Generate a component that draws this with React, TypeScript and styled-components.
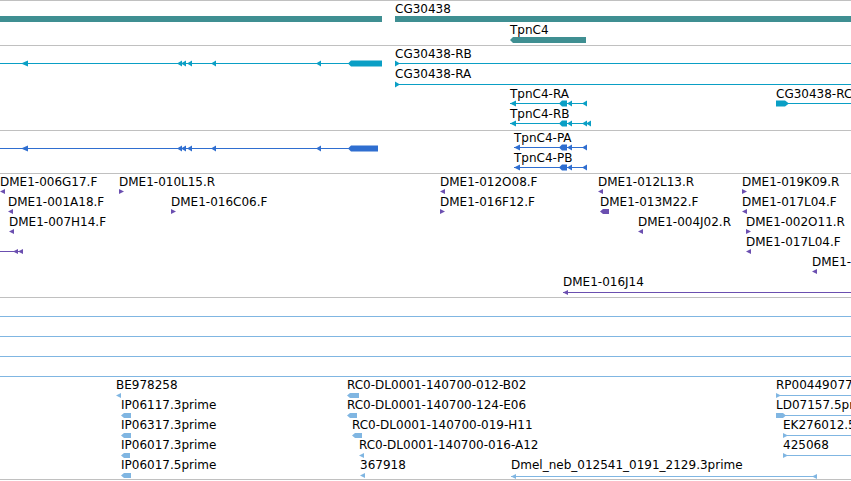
import React from 'react'
import styled, { createGlobalStyle } from 'styled-components'

const GlobalStyle = createGlobalStyle`
  html, body {
    margin: 0;
    padding: 0;
    background: #fff;
  }
  body {
    overflow: hidden;
    font-family: 'DejaVu Sans', 'Liberation Sans', sans-serif;
  }
`

const Panel = styled.div`
  width: 851px;
  height: 481px;
  overflow: hidden;
  display: flex;
  flex-direction: column;
  background: #fff;
`

const Track = styled.div<{ $h: number; $last?: boolean }>`
  position: relative;
  flex: none;
  box-sizing: border-box;
  height: ${p => p.$h}px;
  border-top: 1px solid #c0c0c0;
  ${p => (p.$last ? 'border-bottom: 1px solid #c0c0c0;' : '')}
`

const Art = styled.svg`
  position: absolute;
  left: 0;
  top: 0;
  overflow: visible;
`

const Label = styled.span`
  position: absolute;
  font-size: 12px;
  line-height: 12px;
  color: #000;
  white-space: nowrap;
`

const TEAL = '#3f8f92'
const CYAN = '#0a9fc5'
const BLUE = '#2f6ed0'
const PURPLE = '#6b4fb0'
const LBLUE = '#80b6e2'

type Shape =
  | { k: 'line'; x1: number; x2: number; y: number }
  | { k: 'arrow'; x: number; y: number; dir: 'l' | 'r'; w?: number; h?: number }
  | { k: 'block'; x1: number; x2: number; y: number; h: number; dir?: 'l' | 'r' }

interface TrackData {
  top: number
  height: number
  color: string
  labels: [string, number, number][]
  shapes: Shape[]
}

const line = (x1: number, x2: number, y: number): Shape => ({ k: 'line', x1, x2, y })
const al = (x: number, y: number, w = 5, h = 6): Shape => ({ k: 'arrow', x, y, dir: 'l', w, h })
const ar = (x: number, y: number, w = 5, h = 6): Shape => ({ k: 'arrow', x, y, dir: 'r', w, h })
const block = (x1: number, x2: number, y: number, h = 6, dir?: 'l' | 'r'): Shape => ({
  k: 'block',
  x1,
  x2,
  y,
  h,
  dir,
})

// exon pattern shared by the two TpnC4 rows
const tpnc = (x: number, end: number, y: number, extra = false): Shape[] => [
  line(x, end, y),
  al(x, y, 6),
  block(559, 567, y, 6, 'l'),
  al(567, y),
  al(582, y),
  ...(extra ? [al(586, y)] : []),
]

const leftModel = (y: number, end: number): Shape[] => [
  line(0, end, y),
  al(21, y, 7),
  al(177, y),
  al(181, y),
  al(187, y),
  al(211, y),
  al(316, y),
  block(348, end, y, 6, 'l'),
]

const tracks: TrackData[] = [
  {
    top: 0,
    height: 45,
    color: TEAL,
    labels: [
      ['CG30438', 395, 13],
      ['TpnC4', 510, 34],
    ],
    shapes: [block(0, 382, 19, 6), block(395, 851, 19, 6), block(510, 586, 40, 6, 'l')],
  },
  {
    top: 45,
    height: 85,
    color: CYAN,
    labels: [
      ['CG30438-RB', 395, 58],
      ['CG30438-RA', 395, 78],
      ['TpnC4-RA', 510, 98],
      ['TpnC4-RB', 510, 118],
      ['CG30438-RC', 776, 98],
    ],
    shapes: [
      ...leftModel(63.5, 382),
      line(395, 851, 63.5),
      ar(395, 63.5),
      line(395, 851, 84.5),
      ar(395, 84.5),
      ...tpnc(510, 587, 103.5),
      ...tpnc(510, 590, 123.5, true),
      line(776, 851, 103.5),
      block(776, 785, 103.5, 6),
      ar(785, 103.5, 4),
    ],
  },
  {
    top: 130,
    height: 43,
    color: BLUE,
    labels: [
      ['TpnC4-PA', 514, 142],
      ['TpnC4-PB', 514, 162],
    ],
    shapes: [...leftModel(148.5, 378), ...tpnc(514, 586, 147.5), ...tpnc(514, 586, 167.5)],
  },
  {
    top: 173,
    height: 124,
    color: PURPLE,
    labels: [
      ['DME1-006G17.F', 0, 186],
      ['DME1-010L15.R', 119, 186],
      ['DME1-001A18.F', 8, 206],
      ['DME1-016C06.F', 171, 206],
      ['DME1-007H14.F', 9, 226],
      ['DME1-012O08.F', 440, 186],
      ['DME1-016F12.F', 440, 206],
      ['DME1-012L13.R', 598, 186],
      ['DME1-013M22.F', 600, 206],
      ['DME1-004J02.R', 638, 226],
      ['DME1-019K09.R', 742, 186],
      ['DME1-017L04.F', 742, 206],
      ['DME1-002O11.R', 746, 226],
      ['DME1-017L04.F', 746, 246],
      ['DME1-020B03.F', 812, 266],
      ['DME1-016J14', 563, 286],
    ],
    shapes: [
      al(0, 191.5, 5, 5),
      ar(119, 191.5, 5, 5),
      al(8, 211.5, 5, 5),
      ar(171, 211.5, 5, 5),
      al(9, 231.5, 5, 5),
      line(0, 23, 251.5),
      al(13, 251.5, 5, 5),
      al(18, 251.5, 5, 5),
      al(440, 191.5, 5, 5),
      ar(440, 211.5, 5, 5),
      al(598, 191.5, 5, 5),
      block(600, 609, 211.5, 5, 'l'),
      al(638, 231.5, 5, 5),
      ar(742, 191.5, 5, 5),
      al(742, 211.5, 5, 5),
      ar(746, 231.5, 5, 5),
      al(746, 251.5, 5, 5),
      al(812, 271.5, 5, 5),
      line(563, 851, 292.5),
      al(563, 292.5, 5, 5),
    ],
  },
  {
    top: 297,
    height: 183,
    color: LBLUE,
    labels: [
      ['BE978258', 116, 389],
      ['IP06117.3prime', 121, 409],
      ['IP06317.3prime', 121, 429],
      ['IP06017.3prime', 121, 449],
      ['IP06017.5prime', 121, 469],
      ['RC0-DL0001-140700-012-B02', 347, 389],
      ['RC0-DL0001-140700-124-E06', 347, 409],
      ['RC0-DL0001-140700-019-H11', 352, 429],
      ['RC0-DL0001-140700-016-A12', 359, 449],
      ['367918', 360, 469],
      ['Dmel_neb_012541_0191_2129.3prime', 511, 469],
      ['RP00449077.5prime', 776, 389],
      ['LD07157.5prime', 776, 409],
      ['EK276012.5prime', 783, 429],
      ['425068', 783, 449],
    ],
    shapes: [
      line(0, 851, 316.5),
      line(0, 851, 336.5),
      line(0, 851, 356.5),
      line(0, 851, 376.5),
      al(116, 395.5, 5, 5),
      block(121, 131, 415.5, 5, 'l'),
      block(121, 131, 435.5, 5, 'l'),
      block(121, 130, 455.5, 5, 'l'),
      block(121, 131, 475.5, 5, 'l'),
      block(347, 359, 395.5, 5, 'l'),
      block(347, 357, 415.5, 5, 'l'),
      block(352, 362, 435.5, 5, 'l'),
      al(359, 455.5, 5, 5),
      al(360, 475.5, 5, 5),
      line(511, 817, 476.5),
      al(511, 476.5, 5, 5),
      al(812, 476.5, 5, 5),
      line(776, 851, 395.5),
      ar(776, 395.5, 5, 5),
      line(776, 851, 415.5),
      block(776, 786, 415.5, 5, 'r'),
      line(783, 851, 435.5),
      ar(783, 435.5, 5, 5),
      line(783, 851, 455.5),
      ar(783, 455.5, 5, 5),
    ],
  },
]

function Glyph({ s, color }: { s: Shape; color: string }) {
  if (s.k === 'line') {
    return <rect x={s.x1} y={s.y - 0.5} width={s.x2 - s.x1} height={1} fill={color} />
  }
  if (s.k === 'arrow') {
    const w = s.w ?? 5
    const h = (s.h ?? 6) / 2
    const pts =
      s.dir === 'l'
        ? `${s.x},${s.y} ${s.x + w},${s.y - h} ${s.x + w},${s.y + h}`
        : `${s.x + w},${s.y} ${s.x},${s.y - h} ${s.x},${s.y + h}`
    return <polygon points={pts} fill={color} />
  }
  const h = s.h / 2
  const t = s.y - h
  const b = s.y + h
  let pts = `${s.x1},${t} ${s.x2},${t} ${s.x2},${b} ${s.x1},${b}`
  if (s.dir === 'l') pts = `${s.x1},${s.y} ${s.x1 + 3},${t} ${s.x2},${t} ${s.x2},${b} ${s.x1 + 3},${b}`
  if (s.dir === 'r') pts = `${s.x1},${t} ${s.x2 - 3},${t} ${s.x2},${s.y} ${s.x2 - 3},${b} ${s.x1},${b}`
  return <polygon points={pts} fill={color} />
}

export default function App() {
  return (
    <>
      <GlobalStyle />
      <Panel>
        {tracks.map((t, i) => {
          const origin = t.top + 1
          return (
            <Track key={i} $h={t.height} $last={i === tracks.length - 1}>
              <Art width={851} height={t.height - 1}>
                <g transform={`translate(0 ${-origin})`}>
                  {t.shapes.map((s, j) => (
                    <Glyph key={j} s={s} color={t.color} />
                  ))}
                </g>
              </Art>
              {t.labels.map(([text, x, base], j) => (
                <Label key={j} style={{ left: x, top: base - 10 - origin }}>
                  {text}
                </Label>
              ))}
            </Track>
          )
        })}
      </Panel>
    </>
  )
}
